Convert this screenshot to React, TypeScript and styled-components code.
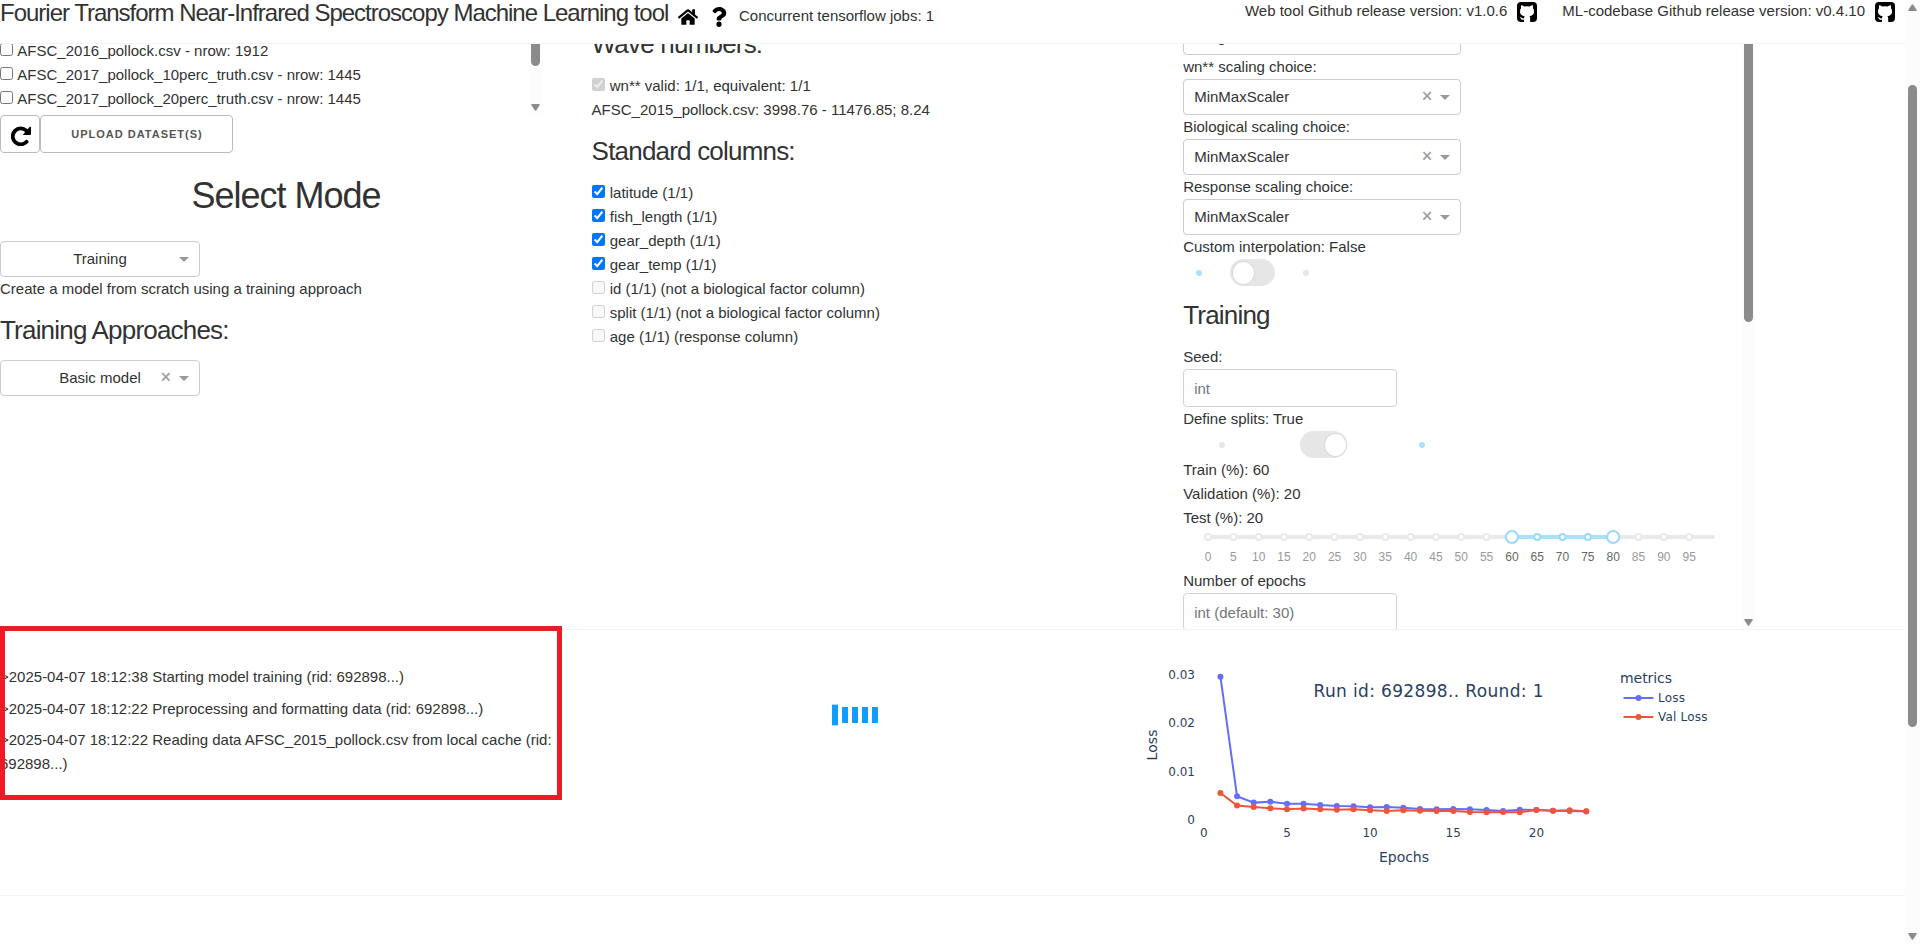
import React from 'react';
import styled, { createGlobalStyle } from 'styled-components';
import { FaHome, FaQuestion } from 'react-icons/fa';

const GlobalStyle = createGlobalStyle`
  *, *::before, *::after { box-sizing: border-box; }
  body {
    margin: 0;
    background: #fff;
    color: #323232;
    font: 15px/24px "Liberation Sans", Arial, sans-serif;
    overflow: hidden;
  }
`;

const Page = styled.div`
  display: grid;
  grid-template-columns: 1fr 15px;
  height: 944px;
`;

const Content = styled.div`
  display: flex;
  flex-direction: column;
  min-width: 0;
`;

const Header = styled.header`
  display: flex;
  align-items: flex-start;
  height: 44px;
  border-bottom: 1px solid #f3f3f3;
  white-space: nowrap;
  svg { display: block; color: #000; }
`;

const Title = styled.h1`
  margin: -3px 0 0;
  font-size: 24px;
  font-weight: 400;
  line-height: 32px;
  letter-spacing: -1.01px;
  width: 678px;
`;

const HomeSlot = styled.span`
  width: 33px;
  padding-top: 7px;
`;

const HelpSlot = styled.span`
  width: 28px;
  padding-top: 7px;
  svg { margin-left: -2px; }
`;

const Jobs = styled.span`
  padding-top: 4px;
`;

const Releases = styled.div`
  display: flex;
  gap: 25px;
  margin-left: auto;
  padding-right: 10px;
`;

const Release = styled.span`
  display: flex;
  gap: 10px;
  line-height: 22px;
  svg { width: 20px; height: 20px; margin-top: 2px; }
`;

const Settings = styled.main`
  display: grid;
  grid-template-columns: 572px 572px 572px;
  column-gap: 19.6px;
  height: 586px;
  overflow: hidden;
  border-bottom: 1px solid #f3f3f3;
`;

const Column = styled.section`
  min-width: 0;
`;

const Scroller = styled.div<{ $width: number; $height: number }>`
  display: flex;
  justify-content: space-between;
  width: ${p => p.$width}px;
  height: ${p => p.$height}px;
  overflow: hidden;
`;

const ScrollBody = styled.div<{ $shift: number }>`
  flex: 1;
  margin-top: -${p => p.$shift}px;
`;

const Track = styled.div<{ $w: number }>`
  display: flex;
  flex-direction: column;
  padding-left: ${p => (p.$w === 15 ? 3 : 2)}px;
  width: ${p => p.$w}px;
  background: #fcfcfc;
`;

const Thumb = styled.div<{ $h: number; $open?: boolean }>`
  width: 9px;
  height: ${p => p.$h}px;
  background: #8b8b8b;
  border-radius: ${p => (p.$open ? '0 0 5px 5px' : '5px')};
`;

const TrackArrow = styled.svg`
  display: block;
  width: 9px;
  height: 7px;
  fill: #8b8b8b;
`;

const Spacer = styled.div<{ $h?: number }>`
  ${p => (p.$h === undefined ? 'flex: 1;' : `height: ${p.$h}px;`)}
`;

const CheckLine = styled.label`
  display: block;
  height: 24px;
  white-space: nowrap;
  input { margin: 0 1px 0 0; }
`;

const Line = styled.div`
  height: 24px;
  white-space: nowrap;
`;

const Heading = styled.h4<{ $top: number; $bottom: number }>`
  margin: ${p => p.$top}px 0 ${p => p.$bottom}px;
  font-size: 26px;
  font-weight: 400;
  line-height: 36px;
  letter-spacing: -0.8px;
  white-space: nowrap;
`;

const ModeHeading = styled.h2`
  margin: 21px 0 23px;
  font-size: 36px;
  font-weight: 400;
  line-height: 44px;
  letter-spacing: -1px;
  text-align: center;
`;

const ButtonRow = styled.div`
  display: flex;
`;

const Button = styled.button<{ $w: number }>`
  display: flex;
  align-items: center;
  justify-content: center;
  width: ${p => p.$w}px;
  height: 38px;
  padding: 1px 0 0 1px;
  border: 1px solid #bbb;
  border-radius: 4px;
  background: transparent;
  color: #555;
  font: 600 11px/37px "Liberation Sans", Arial, sans-serif;
  letter-spacing: 1px;
  white-space: nowrap;
  svg { margin-top: 2px; }
`;

const SelectBox = styled.div<{ $w: number; $center?: boolean }>`
  position: relative;
  width: ${p => p.$w}px;
  height: 36px;
  padding: 0 10px;
  border: 1px solid #ccc;
  border-radius: 4px;
  line-height: 34px;
  text-align: ${p => (p.$center ? 'center' : 'left')};
`;

const SelectIcons = styled.span`
  position: absolute;
  right: 10px;
  top: 0;
  height: 34px;
  display: flex;
  align-items: center;
  gap: 8px;
  color: #999;
  font-size: 18px;
  svg { fill: #999; width: 10px; height: 5px; margin-top: 1px; }
  b { font-weight: 400; margin-top: -3px; -webkit-text-stroke: 0.3px #999; }
`;

const Input = styled.input`
  display: block;
  width: 214px;
  height: 38px;
  padding: 6px 10px;
  border: 1px solid #d1d1d1;
  border-radius: 4px;
  font: 15px "Liberation Sans", Arial, sans-serif;
  &::placeholder { color: #757575; }
`;

const ToggleRow = styled.div<{ $left: number; $before: number; $after: number }>`
  display: grid;
  grid-template-columns: ${p => 6 + p.$before}px auto auto;
  justify-content: start;
  align-items: center;
  column-gap: 0;
  height: 27px;
  padding-left: ${p => p.$left}px;
  & > :last-child { margin-left: ${p => p.$after}px; }
`;

const Dot = styled.i<{ $on?: boolean }>`
  width: 6px;
  height: 6px;
  border-radius: 50%;
  background: ${p => (p.$on ? '#abe2fb' : '#e6e6e6')};
`;

const Switch = styled.div<{ $on?: boolean }>`
  display: flex;
  align-items: center;
  justify-content: ${p => (p.$on ? 'flex-end' : 'flex-start')};
  width: ${p => (p.$on ? 47 : 45)}px;
  height: 27px;
  padding: 0 ${p => (p.$on ? 1 : 3)}px;
  border-radius: 14px;
  background: #e6e6e6;
  &::after {
    content: '';
    width: 21px;
    height: 22px;
    border-radius: 50%;
    background: #fff;
    box-shadow: 0 0 1px 1px #d9d9d9;
  }
`;

const Slider = styled.svg`
  display: block;
  width: 559px;
  height: 39px;
  font: 12px "Liberation Sans", Arial, sans-serif;
  text-anchor: middle;
`;

const Results = styled.section`
  display: grid;
  grid-template-columns: 572px 572px 1fr;
  column-gap: 0;
  height: 266px;
  border-bottom: 1px solid #f3f3f3;
`;

const LogPane = styled.div`
  position: relative;
  padding-top: 35px;
`;

const LogEntry = styled.p`
  width: 560px;
  margin: 0 0 7.5px;
`;

const Marker = styled.div`
  position: absolute;
  left: 0;
  top: -4px;
  width: 562px;
  height: 174px;
  border: 5px solid #ed1c24;
`;

const LoaderPane = styled.div`
  display: flex;
  align-items: center;
  gap: 4px;
  height: 22px;
  margin: 74px 0 0 260px;
`;

const LoaderBar = styled.i<{ $tall?: boolean }>`
  width: 6px;
  height: ${p => (p.$tall ? 22 : 16)}px;
  background: #119dff;
  ${p => p.$tall && 'border: solid #a5d9ff; border-width: 1px 0;'}
`;

const Chart = styled.svg`
  display: block;
  width: 620px;
  height: 260px;
  font: 12px "DejaVu Sans", Verdana, sans-serif;
  fill: #2a3f5f;
`;

const Down = () => (
  <TrackArrow viewBox="0 0 9 7"><path d="M1 0h7q1 0 .7 1L5.3 6.3q-.8 1-1.6 0L.3 1Q0 0 1 0z" /></TrackArrow>
);
const Up = () => (
  <TrackArrow viewBox="0 0 9 7"><path d="M1 7h7q1 0 .7-1L5.3.7q-.8-1-1.6 0L.3 6Q0 7 1 7z" /></TrackArrow>
);

const ReloadIcon = () => (
  <svg width="20" height="20" viewBox="0 0 20 20">
    <path d="M15.600 15.800A8 8 0 1 1 15.300 4.600" fill="none" stroke="#000" strokeWidth={3.800} strokeLinecap="round" />
    <path d="M20 .8v7.400q0 .8-.8.8h-7.400L14 6.300 18.500 1z" fill="#000" />
  </svg>
);

const GithubIcon = () => (
  <svg viewBox="0 0 20 20">
    <rect width="20" height="20" rx="4" fill="#000" />
    <path
      fill="#fff"
      d="M4.200 3.200c1.100 0 2.300.7 3 1.300q2.800-.6 5.600 0c.7-.6 1.900-1.300 3-1.300.4 1 .4 2 .1 2.800.8 1 1.200 2 1.200 3.300 0 3.300-2 4.500-4.700 4.900.6.7.8 1.400.8 2.400V20H7v-2.200c-3 .5-2.900-1.900-4.400-2.400 1.900-.6 2.300 1.400 4.400 1 0-.9.200-1.600.7-2.200C5 13.800 3 12.600 3 9.300 3 8 3.400 7 4.100 6c-.3-.8-.3-1.800.1-2.800z"
    />
  </svg>
);

const Select = ({ value, w = 278, center, clearable = true }: { value: string; w?: number; center?: boolean; clearable?: boolean }) => (
  <SelectBox $w={w} $center={center}>
    {value}
    <SelectIcons>
      {clearable && <b>×</b>}
      <svg viewBox="0 0 10 5"><path d="M0 0h10L5 5z" /></svg>
    </SelectIcons>
  </SelectBox>
);

const files = [
  'AFSC_2016_pollock.csv - nrow: 1912',
  'AFSC_2017_pollock_10perc_truth.csv - nrow: 1445',
  'AFSC_2017_pollock_20perc_truth.csv - nrow: 1445',
];

const columns: [string, boolean][] = [
  ['latitude (1/1)', true],
  ['fish_length (1/1)', true],
  ['gear_depth (1/1)', true],
  ['gear_temp (1/1)', true],
  ['id (1/1) (not a biological factor column)', false],
  ['split (1/1) (not a biological factor column)', false],
  ['age (1/1) (response column)', false],
];

const marks = Array.from({ length: 20 }, (_, i) => i * 5);
const markX = (v: number) => 25 + v * 5.065;

const SplitSlider = () => (
  <Slider>
    <rect x={22} y={5} width={510} height={4} rx={2} fill="#e9e9e9" />
    <rect x={markX(60)} y={5} width={markX(80) - markX(60)} height={4} fill="#abe2fb" />
    {marks.map(v => {
      const active = v >= 60 && v <= 80;
      const handle = v === 60 || v === 80;
      return (
        <g key={v}>
          <circle cx={markX(v)} cy={7} r={handle ? 6 : 3} fill="#fff" stroke={active ? '#96dbfa' : '#e9e9e9'} strokeWidth={2} />
          <text x={markX(v)} y={31} fill={active ? '#666' : '#999'}>{v}</text>
        </g>
      );
    })}
  </Slider>
);

const loss = [0.02958, 0.00486, 0.00355, 0.00375, 0.00334, 0.00334, 0.00306, 0.00286, 0.00279, 0.00258, 0.00265, 0.00251,
  0.00224, 0.00217, 0.00224, 0.00217, 0.00203, 0.00183, 0.0021, 0.00203, 0.00189, 0.00183, 0.00169];
const valLoss = [0.00554, 0.00293, 0.00265, 0.00238, 0.00217, 0.00231, 0.00217, 0.0021, 0.00217, 0.00196, 0.00183, 0.00196,
  0.00189, 0.00183, 0.00183, 0.00162, 0.00155, 0.00162, 0.00155, 0.00203, 0.00189, 0.00196, 0.00176];

const px = (epoch: number) => 59.8 + epoch * 16.63;
const py = (v: number) => 189.8 - v * 4840;

const Series = ({ data, color }: { data: number[]; color: string }) => (
  <g fill={color}>
    <polyline points={data.map((v, i) => `${px(i + 1)},${py(v)}`).join(' ')} fill="none" stroke={color} strokeWidth={2} />
    {data.map((v, i) => <circle key={i} cx={px(i + 1)} cy={py(v)} r={3} />)}
  </g>
);

const LegendItem = ({ y, label, color, w }: { y: number; label: string; color: string; w: number }) => (
  <g>
    <path d={`M479.5 ${y}h30`} stroke={color} strokeWidth={2} />
    <circle cx={494.5} cy={y} r={3} fill={color} />
    <text x={514} y={y + 4.3} textLength={w}>{label}</text>
  </g>
);

const LossChart = () => (
  <Chart>
    {['0', '0.01', '0.02', '0.03'].map(t => (
      <text key={t} x={51} y={py(Number(t)) + 4.3} textAnchor="end">{t}</text>
    ))}
    {[0, 5, 10, 15, 20].map(t => (
      <text key={t} x={px(t)} y={206.5} textAnchor="middle">{t}</text>
    ))}
    <text x={260} y={232} fontSize={14} textAnchor="middle" textLength={50}>Epochs</text>
    <text transform="translate(12.8 115) rotate(-90)" fontSize={14} textAnchor="middle" textLength={31}>Loss</text>
    <Series data={loss} color="#636efa" />
    <Series data={valLoss} color="#ef553b" />
    <text x={169.5} y={67} fontSize={17} textLength={230}>Run id: 692898.. Round: 1</text>
    <text x={476} y={53} fontSize={14} textLength={52}>metrics</text>
    <LegendItem y={68} label="Loss" color="#636efa" w={27} />
    <LegendItem y={87} label="Val Loss" color="#ef553b" w={49.5} />
  </Chart>
);

export default function App() {
  return (
    <>
      <GlobalStyle />
      <Page>
        <Content>
          <Header>
            <Title>Fourier Transform Near-Infrared Spectroscopy Machine Learning tool</Title>
            <HomeSlot><FaHome size={20} /></HomeSlot>
            <HelpSlot><FaQuestion size={20} /></HelpSlot>
            <Jobs>Concurrent tensorflow jobs: 1</Jobs>
            <Releases>
              <Release>Web tool Github release version: v1.0.6 <GithubIcon /></Release>
              <Release>ML-codebase Github release version: v0.4.10 <GithubIcon /></Release>
            </Releases>
          </Header>
          <Settings>
            <Column>
              <Scroller $width={543} $height={71}>
                <ScrollBody $shift={5}>
                  {files.map(f => <CheckLine key={f}><input type="checkbox" /> {f}</CheckLine>)}
                </ScrollBody>
                <Track $w={14}>
                  <Thumb $h={22} $open />
                  <Spacer />
                  <Down />
                  <Spacer $h={4} />
                </Track>
              </Scroller>
              <ButtonRow>
                <Button $w={40}><ReloadIcon /></Button>
                <Button $w={193}>UPLOAD DATASET(S)</Button>
              </ButtonRow>
              <ModeHeading>Select Mode</ModeHeading>
              <Select value="Training" w={200} center clearable={false} />
              <Line>Create a model from scratch using a training approach</Line>
              <Heading $top={11} $bottom={12}>Training Approaches:</Heading>
              <Select value="Basic model" w={200} center />
            </Column>
            <Column>
              <ScrollBody $shift={18}>
                <Heading $top={0} $bottom={12}>Wave numbers:</Heading>
                <CheckLine><input type="checkbox" checked disabled readOnly /> wn** valid: 1/1, equivalent: 1/1</CheckLine>
                <Line>AFSC_2015_pollock.csv: 3998.76 - 11476.85; 8.24</Line>
                <Heading $top={11} $bottom={12}>Standard columns:</Heading>
                {columns.map(([name, on]) => (
                  <CheckLine key={name}><input type="checkbox" checked={on} disabled={!on} readOnly /> {name}</CheckLine>
                ))}
              </ScrollBody>
            </Column>
            <Column>
              <Scroller $width={572} $height={585}>
                <ScrollBody $shift={25}>
                  <Select value="savgol" />
                  <Line>wn** scaling choice:</Line>
                  <Select value="MinMaxScaler" />
                  <Line>Biological scaling choice:</Line>
                  <Select value="MinMaxScaler" />
                  <Line>Response scaling choice:</Line>
                  <Select value="MinMaxScaler" />
                  <Line>Custom interpolation: False</Line>
                  <ToggleRow $left={13} $before={28} $after={28}><Dot $on /><Switch /><Dot /></ToggleRow>
                  <Heading $top={11} $bottom={12}>Training</Heading>
                  <Line>Seed:</Line>
                  <Input placeholder="int" />
                  <Line>Define splits: True</Line>
                  <ToggleRow $left={36} $before={75} $after={72}><Dot /><Switch $on /><Dot $on /></ToggleRow>
                  <Line>Train (%): 60</Line>
                  <Line>Validation (%): 20</Line>
                  <Line>Test (%): 20</Line>
                  <SplitSlider />
                  <Line>Number of epochs</Line>
                  <Input placeholder="int (default: 30)" />
                </ScrollBody>
                <Track $w={14}>
                  <Thumb $h={278} $open />
                  <Spacer />
                  <Down />
                  <Spacer $h={3} />
                </Track>
              </Scroller>
            </Column>
          </Settings>
          <Results>
            <LogPane>
              <LogEntry>&gt;2025-04-07 18:12:38 Starting model training (rid: 692898...)</LogEntry>
              <LogEntry>&gt;2025-04-07 18:12:22 Preprocessing and formatting data (rid: 692898...)</LogEntry>
              <LogEntry>&gt;2025-04-07 18:12:22 Reading data AFSC_2015_pollock.csv from local cache (rid: 692898...)</LogEntry>
              <Marker />
            </LogPane>
            <LoaderPane>
              <LoaderBar $tall /><LoaderBar /><LoaderBar /><LoaderBar /><LoaderBar />
            </LoaderPane>
            <LossChart />
          </Results>
        </Content>
        <Track $w={15}>
          <Spacer $h={4} />
          <Up />
          <Spacer $h={74} />
          <Thumb $h={642} />
          <Spacer />
          <Down />
          <Spacer $h={4} />
        </Track>
      </Page>
    </>
  );
}
